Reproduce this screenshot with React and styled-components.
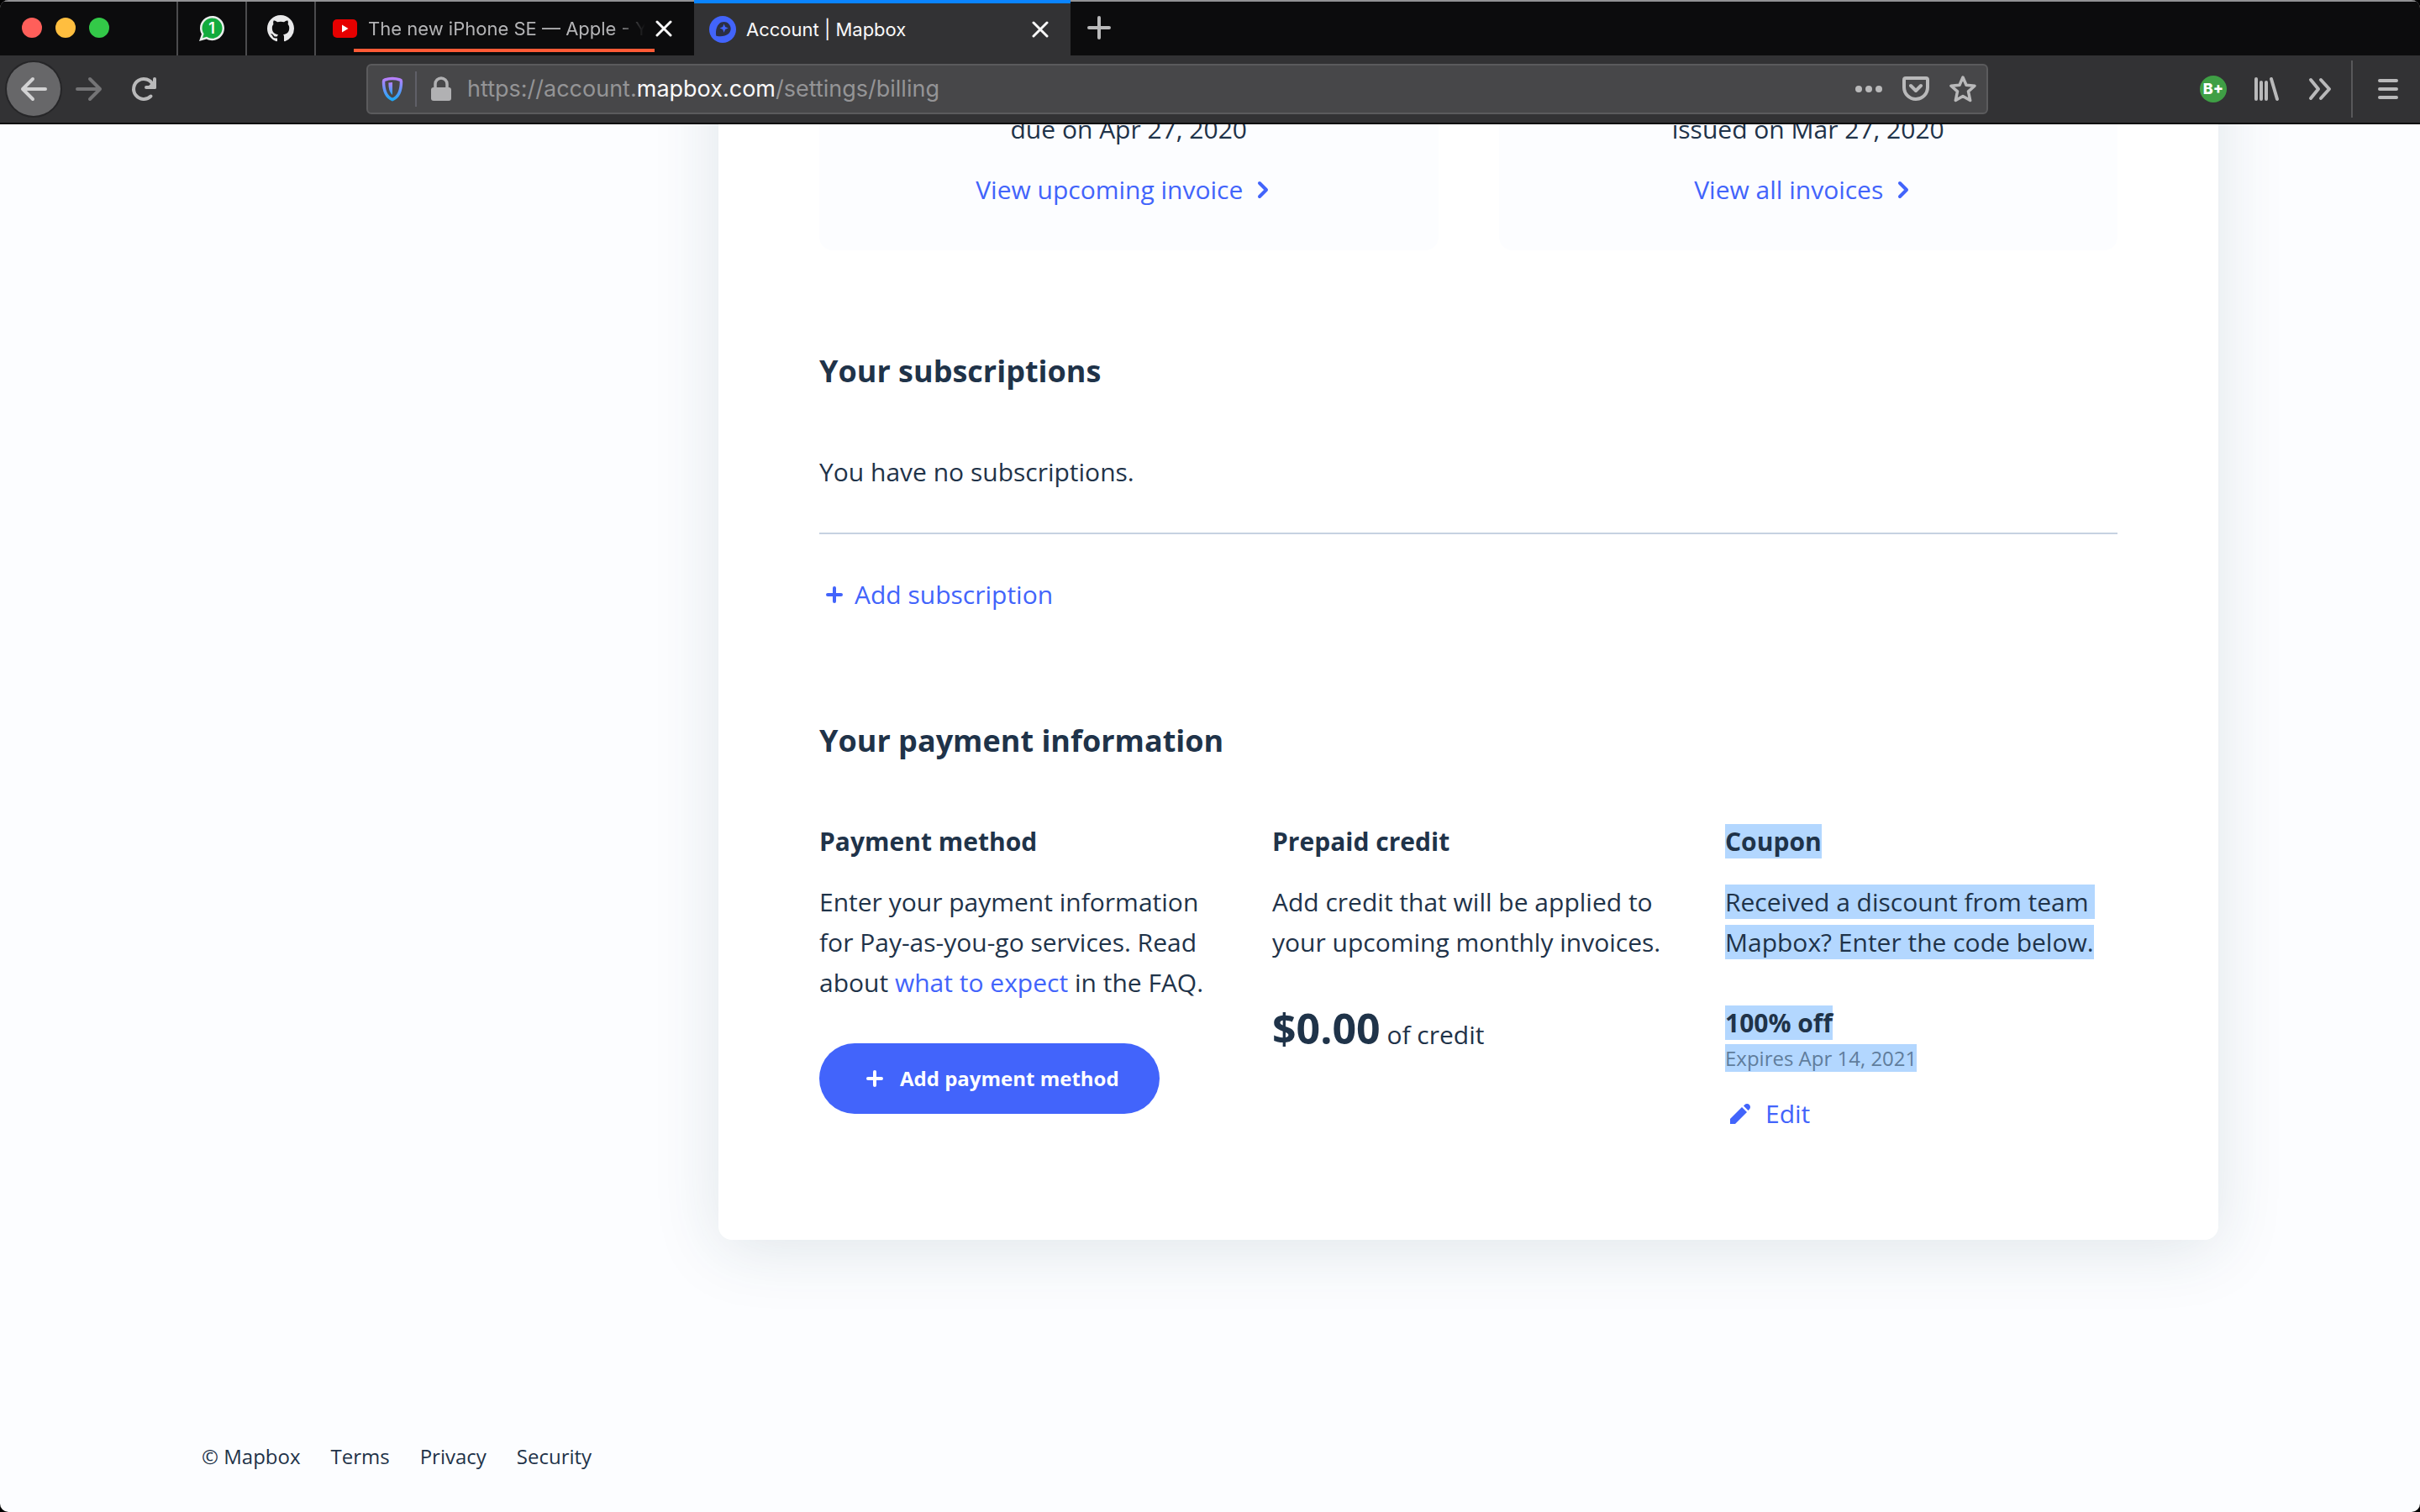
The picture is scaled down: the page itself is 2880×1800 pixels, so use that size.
import React from 'react';
import styled, { createGlobalStyle, css } from 'styled-components';

const color = {
  ink: '#1f3349',
  blue: '#4264fb',
  muted: '#607d9c',
  page: '#fcfdff',
  rule: '#c6d2e1',
  selection: '#b3d7ff',
  strip: '#0c0c0d',
  bar: '#323234',
  field: '#474749',
  icon: '#b9b9ba',
};

const GlobalStyle = createGlobalStyle`
  *, *::before, *::after { box-sizing: border-box; }
  body { margin: 0; background: #000; }
  h2, h3, p, ul { margin: 0; padding: 0; }
  button, input { font: inherit; color: inherit; margin: 0; padding: 0; border: 0; background: none; }
  svg { display: block; flex: none; }
`;

const Window = styled.div`
  display: flex;
  flex-direction: column;
  height: 100vh;
  overflow: hidden;
  border-radius: 10px;
  background: ${color.page};
  font-family: 'Open Sans', 'Noto Sans', sans-serif;
  color: ${color.ink};
`;

/* ---------- browser chrome ---------- */

const Chrome = styled.header`
  flex: none;
  font-family: Inter, Roboto, sans-serif;
  border-bottom: 2px solid ${color.strip};
  background: ${color.bar};
`;

const TabStrip = styled.div`
  display: flex;
  height: 66px;
  background: ${color.strip};
  border-top: 2px solid #929294;
`;

const Lights = styled.div`
  display: flex;
  align-items: center;
  gap: 16px;
  width: 210px;
  padding: 0 0 2px 26px;
`;

const Light = styled.button`
  width: 24px;
  height: 24px;
  border-radius: 50%;
  background: ${(p) => p.$fill};
`;

const PinnedTab = styled.button`
  display: flex;
  align-items: center;
  justify-content: center;
  width: 82px;
  border-left: 2px solid #4b4b4d;
`;

const Tab = styled.div`
  position: relative;
  display: flex;
  align-items: center;
  gap: 12px;
  width: ${(p) => (p.$active ? 448 : 452)}px;
  padding: 0 26px 0 ${(p) => (p.$active ? 18 : 20)}px;
  color: ${(p) => (p.$active ? '#f9f9fa' : '#b4b4b6')};
  ${(p) =>
    p.$active
      ? css`
          background: ${color.bar};
          border-top: 4px solid #0a84ff;
          margin-top: -2px;
        `
      : css`
          border-left: 2px solid #4b4b4d;
        `}
`;

const TabTitle = styled.span`
  flex: 1;
  min-width: 0;
  overflow: hidden;
  white-space: nowrap;
  font-size: 22px;
  line-height: 32px;
  ${(p) => p.$fade && css`mask-image: linear-gradient(to right, #000 88%, transparent);`}
`;

const TabUnderline = styled.span`
  position: absolute;
  left: 45px;
  right: 47px;
  bottom: 4px;
  height: 4px;
  background: #ff5a36;
`;

const IconButton = styled.button`
  display: flex;
  align-items: center;
  justify-content: center;
  flex: none;
  width: ${(p) => p.$w || 32}px;
  height: ${(p) => p.$h || 32}px;
  color: ${(p) => p.$tone || color.icon};
`;

const NavBar = styled.div`
  display: flex;
  align-items: center;
  height: 80px;
  padding: 0 6px 0 8px;
`;

const NavGroup = styled.div`
  display: flex;
  align-items: center;
  gap: ${(p) => p.$gap}px;
  width: ${(p) => p.$w}px;
  justify-content: ${(p) => p.$justify || 'flex-start'};
`;

const BackButton = styled(IconButton)`
  width: 64px;
  height: 64px;
  border-radius: 50%;
  background: #676769;
  box-shadow: 0 0 0 2px #262628;
`;

const UrlBox = styled.div`
  display: flex;
  align-items: center;
  flex: 1;
  height: 60px;
  padding: 0 12px 0 16px;
  border: 2px solid #5b5b5d;
  border-radius: 6px;
  background: ${color.field};
`;

const UrlDivider = styled.span`
  width: 2px;
  height: 42px;
  margin: 0 16px 0 14px;
  background: #606068;
`;

const Url = styled.div`
  flex: 1;
  margin-left: 18px;
  font-size: 27px;
  line-height: 40px;
  color: #949496;
  white-space: nowrap;

  b { font-weight: 400; color: #f9f9fa; }
`;

const UrlActions = styled.div`
  display: flex;
  align-items: center;
  gap: 24px;
`;

const BarDivider = styled.span`
  width: 2px;
  height: 68px;
  margin: 0 10px 0 4px;
  background: #58585a;
`;

/* ---------- page ---------- */

const Viewport = styled.div`
  flex: 1;
  min-height: 0;
  overflow: hidden;
  display: flex;
  flex-direction: column;
  justify-content: flex-end;
`;

const Page = styled.div`
  width: 100%;
  max-width: 2400px;
  margin: 0 auto;
`;

const Columns = styled.div`
  display: grid;
  grid-template-columns: 615px minmax(0, 1fr);
`;

const Card = styled.main`
  grid-column: 2;
  padding: 120px;
  border-radius: 16px;
  background: #fff;
  box-shadow: 0 10px 80px rgba(30, 70, 85, 0.13);
  font-size: 30px;
  line-height: 48px;
`;

const Split = styled.div`
  display: grid;
  grid-template-columns: repeat(${(p) => p.$count}, minmax(0, 1fr));
  gap: 72px;
`;

const InvoiceBox = styled.section`
  display: flex;
  flex-direction: column;
  align-items: center;
  gap: 24px;
  padding: 48px;
  border-radius: 16px;
  background: ${color.page};
`;

const Section = styled.section`
  margin-top: 120px;
`;

const Title = styled.h2`
  margin-bottom: 72px;
  font-size: 36px;
  line-height: 48px;
  font-weight: 700;
`;

const Subtitle = styled.h3`
  margin-bottom: 24px;
  font-size: 30px;
  line-height: 48px;
  font-weight: 700;
`;

const Link = styled.a`
  color: ${color.blue};
  text-decoration: none;
`;

const IconLink = styled(Link)`
  display: inline-flex;
  align-items: center;
  gap: ${(p) => p.$gap || 6}px;
`;

const EmptyRow = styled.p`
  padding-bottom: 48px;
  margin-bottom: 48px;
  border-bottom: 2px solid ${color.rule};
`;

const Actions = styled.div`
  display: flex;
  padding-bottom: 6px;
`;

const PrimaryButton = styled.button`
  display: inline-flex;
  align-items: center;
  gap: 12px;
  height: 84px;
  margin-top: 48px;
  padding: 0 48px;
  border-radius: 42px;
  background: ${color.blue};
  color: #fff;
  font-size: 24px;
  line-height: 36px;
  font-weight: 700;
`;

const Credit = styled.p`
  margin-top: 48px;
  line-height: 60px;

  strong { font-size: 50px; }
`;

const CouponValue = styled.p`
  margin-top: 48px;
  font-weight: 700;
`;

const Expiry = styled.p`
  margin-bottom: 24px;
  font-size: 24px;
  line-height: 36px;
  color: ${color.muted};
`;

const Selected = styled.span`
  background: ${color.selection};
  white-space: pre-wrap;
`;

const Footer = styled.footer`
  display: flex;
  gap: 36px;
  padding: 240px 0 48px;
  font-size: 24px;
  line-height: 36px;

  a { color: inherit; text-decoration: none; }
`;

/* ---------- icons ---------- */

const Stroke = ({ size = 32, w = 3, box = 32, children }) => (
  <svg width={size} height={size} viewBox={`0 0 ${box} ${box}`} fill="none" stroke="currentColor" strokeWidth={w} strokeLinecap="round" strokeLinejoin="round" aria-hidden="true">
    {children}
  </svg>
);

const CloseIcon = () => (
  <Stroke size={20} box={20} w={3}><path d="M2 2l16 16M18 2L2 18" /></Stroke>
);

const WhatsAppIcon = () => (
  <svg width="32" height="32" viewBox="0 0 32 32" aria-hidden="true">
    <path d="M16.500 1C8.500 1 2 7.500 2 15.500c0 2.600.7 5 1.900 7.100L1 31l8.800-2.400c2 1.100 4.300 1.700 6.700 1.700C24.500 30.300 31 23.700 31 15.600 31 7.500 24.500 1 16.500 1z" fill="#e9edeb" />
    <path d="M16.500 3.500C9.900 3.500 4.500 8.900 4.500 15.500c0 2.500.8 4.900 2.100 6.800L5 27.300l5-1.500c1.900 1.200 4.100 1.900 6.500 1.900 6.600 0 12-5.400 12-12.100 0-6.700-5.400-12.100-12-12.100z" fill="#12ab3d" />
    <text x="16" y="22" textAnchor="middle" fontFamily="Inter, sans-serif" fontSize="18" fontWeight="600" fill="#fff">1</text>
  </svg>
);

const GitHubIcon = () => (
  <svg width="32" height="32" viewBox="0 0 16 16" fill="#e9e9ea" aria-hidden="true">
    <path d="M8 0C3.580 0 0 3.580 0 8c0 3.540 2.290 6.530 5.470 7.590.4.070.55-.17.55-.38 0-.19-.01-.82-.01-1.490-2.010.37-2.530-.49-2.690-.94-.09-.23-.48-.94-.82-1.130-.28-.15-.68-.52-.01-.53.63-.01 1.080.58 1.230.82.72 1.210 1.870.87 2.330.66.070-.52.280-.87.510-1.070-1.780-.2-3.640-.89-3.640-3.950 0-.87.310-1.590.820-2.150-.08-.2-.36-1.020.080-2.120 0 0 .67-.21 2.200.82.640-.18 1.320-.27 2-.27s1.360.090 2 .27c1.530-1.040 2.200-.82 2.200-.82.440 1.100.160 1.920.080 2.120.510.560.820 1.270.820 2.150 0 3.070-1.870 3.750-3.650 3.950.290.250.540.730.540 1.480 0 1.070-.01 1.930-.01 2.200 0 .210.150.460.550.380A8.010 8.010 0 0 0 16 8c0-4.420-3.580-8-8-8z" />
  </svg>
);

const YouTubeIcon = () => (
  <svg width="30" height="24" viewBox="0 0 30 24" aria-hidden="true">
    <rect x="0" y="1" width="29" height="22" rx="5" fill="#e60000" />
    <path d="M11 7.500v9l7.500-4.500z" fill="#fff" />
  </svg>
);

const MapboxIcon = () => (
  <svg width="32" height="32" viewBox="0 0 32 32" aria-hidden="true">
    <circle cx="16" cy="16" r="16" fill={color.blue} />
    <path d="M8.300 23.700s-1.800-9 3.400-14.200c3.300-3.300 8.500-3.200 11.600-.1 3.100 3.100 3.200 8.300-.1 11.600-5.200 5-14.900 2.700-14.900 2.700z" fill="#2b2f45" />
    <path d="M17.600 9.500l1.500 3.600 3.600 1.500-3.600 1.500-1.500 3.600-1.500-3.600-3.600-1.500 3.600-1.500z" fill={color.blue} />
  </svg>
);

const ShieldIcon = () => (
  <svg width="26" height="30" viewBox="0 0 26 30" fill="none" aria-hidden="true">
    <defs>
      <linearGradient id="shield" x1="0" y1="0" x2="0" y2="1">
        <stop offset="0" stopColor="#b880ff" />
        <stop offset="1" stopColor="#1fa8f6" />
      </linearGradient>
    </defs>
    <path d="M13 2.500c3.500 0 6.500.6 9 1.500.9.300 1.500 1 1.500 2 0 9-1.500 18-10.500 21.500C4 24 2.500 15 2.500 6c0-1 .6-1.700 1.500-2 2.500-.9 5.500-1.500 9-1.500z" stroke="url(#shield)" strokeWidth="3.500" />
    <path d="M13 7c-1.500 0-3.200.2-4.600.5 0 6 .8 11.500 4.600 14.500z" fill="url(#shield)" />
  </svg>
);

const LockIcon = () => (
  <svg width="26" height="30" viewBox="0 0 26 30" aria-hidden="true">
    <rect x="1" y="13" width="24" height="16" rx="3" fill="#b1b1b3" />
    <path d="M6 14V9a7 7 0 0 1 14 0v5" fill="none" stroke="#b1b1b3" strokeWidth="3.500" />
  </svg>
);

const PocketIcon = () => (
  <Stroke w={4}>
    <path d="M4 3h24a2 2 0 0 1 2 2v9a14 14 0 0 1-28 0V5a2 2 0 0 1 2-2z" />
    <path d="M10 12l6 6 6-6" />
  </Stroke>
);

const StarIcon = () => (
  <Stroke w={3.500}>
    <path d="M16 2l4 9.200 10 1-7.500 6.700 2.200 10.600-8.700-5-8.700 5 2.200-10.600L2 12.200l10-1z" />
  </Stroke>
);

const ExtensionIcon = () => (
  <svg width="32" height="32" viewBox="0 0 32 32" aria-hidden="true">
    <circle cx="16" cy="16" r="16" fill="#3f9f45" />
    <text x="16" y="22" textAnchor="middle" fontFamily="Inter, sans-serif" fontSize="18" fontWeight="800" fill="#fff">B+</text>
  </svg>
);

const PlusIcon = ({ size = 36 }) => (
  <Stroke size={size} box={36} w={4}><path d="M18 10v16M10 18h16" /></Stroke>
);

const ChevronIcon = () => (
  <svg width="40" height="36" viewBox="0 0 40 36" fill="none" stroke="currentColor" strokeWidth="4" strokeLinecap="round" strokeLinejoin="round" aria-hidden="true">
    <path d="M14 10l8 8-8 8" />
  </svg>
);

const PencilIcon = () => (
  <svg width="36" height="36" viewBox="0 0 36 36" fill="currentColor" aria-hidden="true">
    <path d="M6 30v-6L20 10l6 6-14 14z" />
    <path d="M22 8.500l1.500-1.500a3.500 3.500 0 0 1 2.500-1c2.500 0 4 1.800 4 4a3.500 3.500 0 0 1-1 2.500L27.500 14z" />
  </svg>
);

/* ---------- sections ---------- */

const BrowserChrome = () => (
  <Chrome>
    <TabStrip>
      <Lights>
        <Light $fill="#ff5f5a" aria-label="Close window" />
        <Light $fill="#ffbe3f" aria-label="Minimise window" />
        <Light $fill="#33c948" aria-label="Zoom window" />
      </Lights>
      <PinnedTab aria-label="WhatsApp"><WhatsAppIcon /></PinnedTab>
      <PinnedTab aria-label="GitHub"><GitHubIcon /></PinnedTab>
      <Tab>
        <YouTubeIcon />
        <TabTitle $fade>The new iPhone SE — Apple - YouTube</TabTitle>
        <IconButton $w={20} $tone="#f9f9fa" aria-label="Close tab"><CloseIcon /></IconButton>
        <TabUnderline />
      </Tab>
      <Tab $active>
        <MapboxIcon />
        <TabTitle>Account | Mapbox</TabTitle>
        <IconButton $w={20} $tone="#f9f9fa" aria-label="Close tab"><CloseIcon /></IconButton>
      </Tab>
      <IconButton $w={68} $h={62} aria-label="New tab">
        <Stroke w={4}><path d="M16 4v24M4 16h24" /></Stroke>
      </IconButton>
    </TabStrip>
    <NavBar>
      <NavGroup $gap={18} $w={428}>
        <BackButton $tone="#d2d2d3" aria-label="Back">
          <Stroke w={4}><path d="M30 16H3M15 4L3 16l12 12" /></Stroke>
        </BackButton>
        <IconButton $tone="#747476" aria-label="Forward">
          <Stroke w={4}><path d="M2 16h27M17 4l12 12-12 12" /></Stroke>
        </IconButton>
        <IconButton $w={64} aria-label="Reload">
          <Stroke w={4}>
            <path d="M23.500 24.500A12 12 0 1 1 26 11" />
            <path d="M28 4v10H18" />
            <path d="M28 8v6h-6z" fill="currentColor" />
          </Stroke>
        </IconButton>
      </NavGroup>
      <UrlBox>
        <ShieldIcon />
        <UrlDivider />
        <LockIcon />
        <Url>https://account.<b>mapbox.com</b>/settings/billing</Url>
        <UrlActions>
          <IconButton aria-label="Page actions">
            <svg width="32" height="32" viewBox="0 0 32 32" fill="currentColor" aria-hidden="true">
              <circle cx="4" cy="16" r="4" /><circle cx="16" cy="16" r="4" /><circle cx="28" cy="16" r="4" />
            </svg>
          </IconButton>
          <IconButton aria-label="Save to Pocket"><PocketIcon /></IconButton>
          <IconButton aria-label="Bookmark"><StarIcon /></IconButton>
        </UrlActions>
      </UrlBox>
      <NavGroup $gap={0} $w={508} $justify="flex-end">
        <IconButton $w={64} aria-label="Extension"><ExtensionIcon /></IconButton>
        <IconButton $w={64} aria-label="Library">
          <Stroke w={4}><path d="M3 4v24M9 8v20M15 8v20M21 4l7 24" /></Stroke>
        </IconButton>
        <IconButton $w={64} aria-label="More tools">
          <Stroke w={4}><path d="M4 5l9 11-9 11M16 5l10 11-10 11" /></Stroke>
        </IconButton>
        <BarDivider />
        <IconButton $w={64} aria-label="Menu">
          <Stroke w={4}><path d="M6 6h20M6 16h20M6 26h20" /></Stroke>
        </IconButton>
      </NavGroup>
    </NavBar>
  </Chrome>
);

const Invoice = ({ when, label }) => (
  <InvoiceBox>
    <p>{when}</p>
    <IconLink href="#invoices">{label}<ChevronIcon /></IconLink>
  </InvoiceBox>
);

export default function App() {
  return (
    <Window>
      <GlobalStyle />
      <BrowserChrome />
      <Viewport>
        <Page>
          <Columns>
            <Card>
              <Split $count={2}>
                <Invoice when="due on Apr 27, 2020" label="View upcoming invoice" />
                <Invoice when="issued on Mar 27, 2020" label="View all invoices" />
              </Split>

              <Section>
                <Title>Your subscriptions</Title>
                <EmptyRow>You have no subscriptions.</EmptyRow>
                <Actions>
                  <IconLink href="#subscribe"><PlusIcon />Add subscription</IconLink>
                </Actions>
              </Section>

              <Section>
                <Title>Your payment information</Title>
                <Split $count={3}>
                  <div>
                    <Subtitle>Payment method</Subtitle>
                    <p>
                      Enter your payment information for Pay-as-you-go services. Read about{' '}
                      <Link href="#faq">what to expect</Link> in the FAQ.
                    </p>
                    <PrimaryButton><PlusIcon />Add payment method</PrimaryButton>
                  </div>
                  <div>
                    <Subtitle>Prepaid credit</Subtitle>
                    <p>Add credit that will be applied to your upcoming monthly invoices.</p>
                    <Credit><strong>$0.00</strong> of credit</Credit>
                  </div>
                  <div>
                    <Subtitle><Selected>Coupon</Selected></Subtitle>
                    <p><Selected>Received a discount from team Mapbox? Enter the code below.</Selected></p>
                    <CouponValue><Selected>100% off</Selected></CouponValue>
                    <Expiry><Selected>Expires Apr 14, 2021</Selected></Expiry>
                    <Actions>
                      <IconLink href="#coupon" $gap={12}><PencilIcon />Edit</IconLink>
                    </Actions>
                  </div>
                </Split>
              </Section>
            </Card>
          </Columns>
          <Footer>
            <span>© Mapbox</span>
            <a href="#terms">Terms</a>
            <a href="#privacy">Privacy</a>
            <a href="#security">Security</a>
          </Footer>
        </Page>
      </Viewport>
    </Window>
  );
}
